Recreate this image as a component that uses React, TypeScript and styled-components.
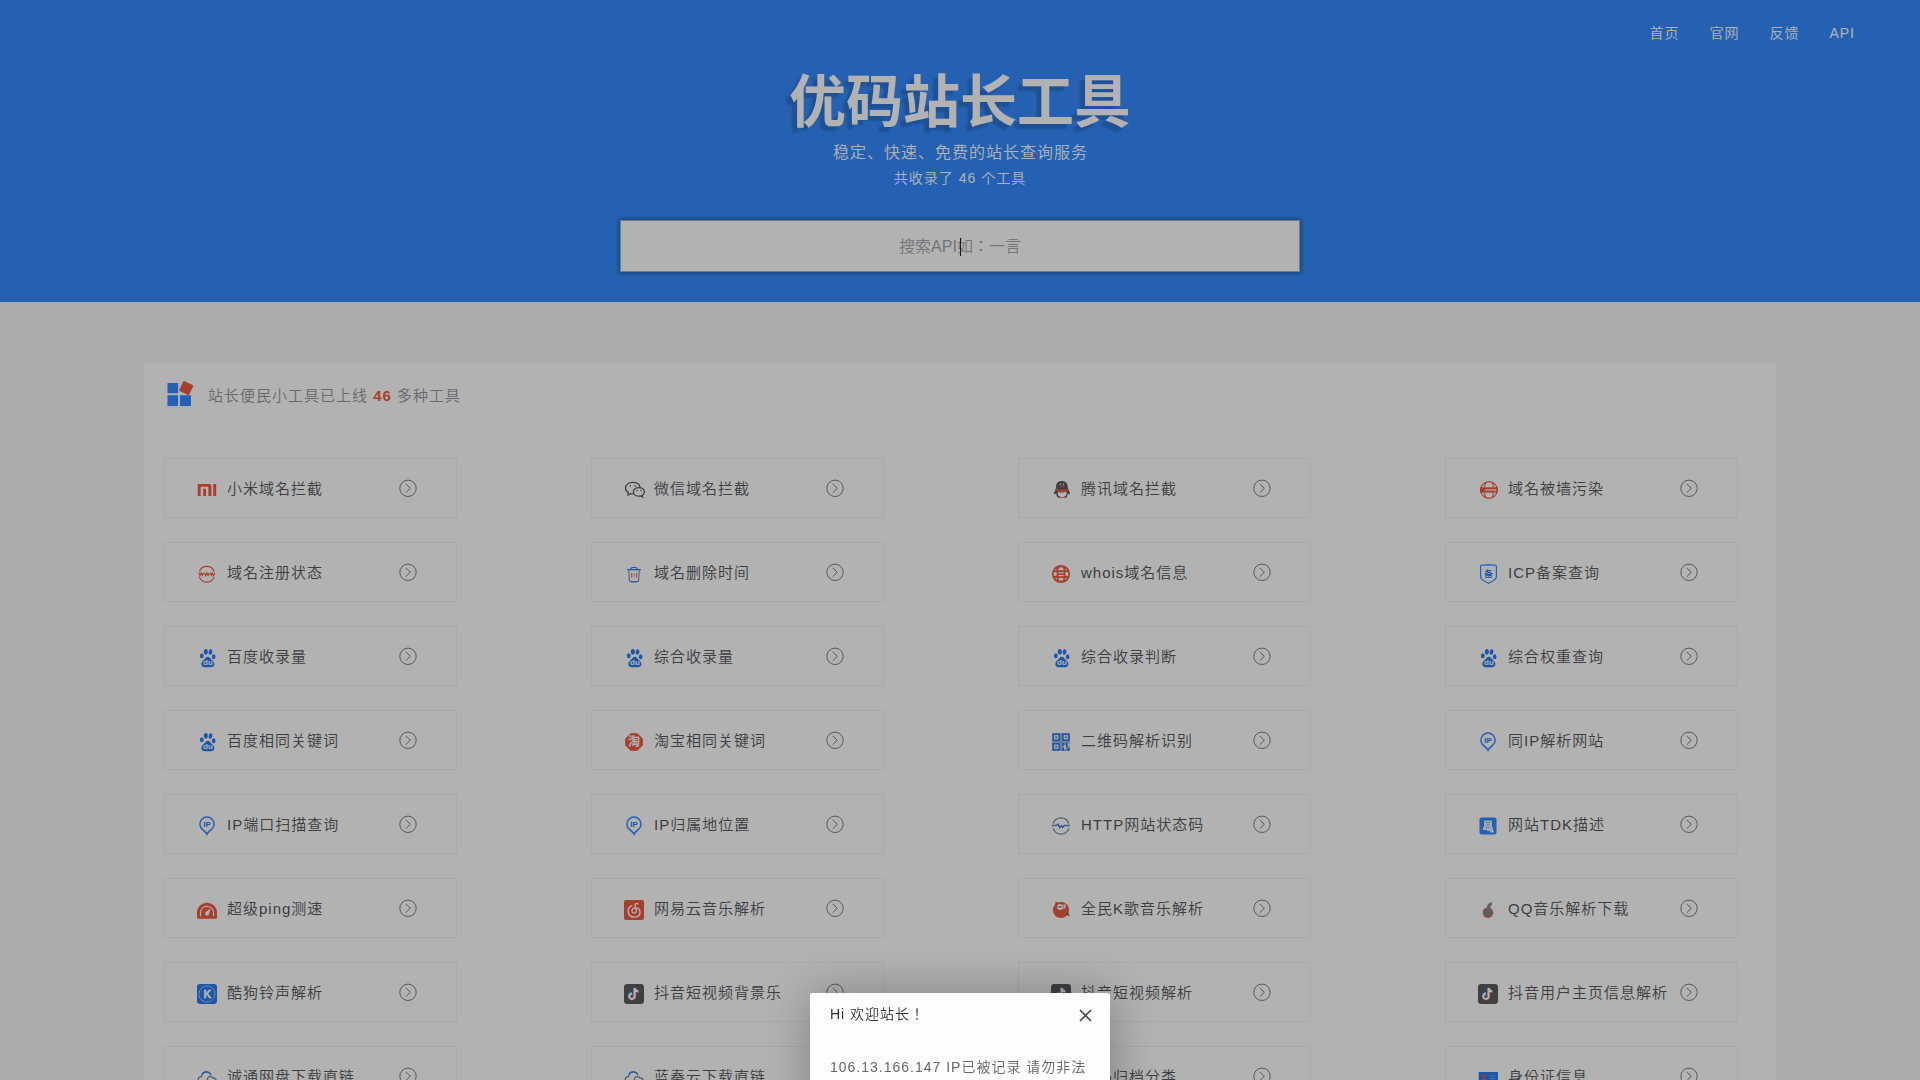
import React from "react";
import styled, { createGlobalStyle } from "styled-components";

const RED = "#ee5b41";
const BLUE = "#358cff";
const DEEP = "#297bf0";
const DARK = "#5c5c5c";

const GlobalStyle = createGlobalStyle`
  html, body { margin: 0; height: 100%; overflow: hidden; }
  body {
    background: #f5f5f5;
    font-family: "Liberation Sans", "Noto Sans CJK JP", "Noto Sans CJK SC", sans-serif;
    font-weight: 350;
    letter-spacing: 1px;
    font-size: 14px;
    color: #5c5e62;
  }
  * { box-sizing: border-box; }
`;

const Page = styled.div`
  height: 1080px;
  overflow: hidden;
`;

const Header = styled.header`
  height: 302px;
  background: ${BLUE};
  color: #fff;
  display: flex;
  flex-direction: column;
  align-items: center;
`;

const Nav = styled.nav`
  align-self: stretch;
  display: flex;
  justify-content: flex-end;
  gap: 30px;
  height: 66px;
  line-height: 66px;
  padding-right: 65px;
`;

const NavLink = styled.a`
  color: #fff;
`;

const Title = styled.h1`
  margin: 1px 0 0;
  height: 70px;
  line-height: 70px;
  font-size: 57px;
  font-weight: bold;
  letter-spacing: 0;
  text-shadow: -5px 5px 2px rgba(0, 0, 0, 0.17);
`;

const Slogan = styled.p`
  margin: 3px 0 0 1px;
  font-size: 16px;
  line-height: 26px;
`;

const Count = styled.p`
  margin: 0;
  line-height: 25px;
`;

const SearchBox = styled.div`
  margin-top: 29px;
  width: 680px;
  height: 52px;
  background: #fff;
  border: 1px solid #a9b0bb;
  box-shadow: 0 0 4px 2px rgba(0, 0, 0, 0.25);
  display: flex;
  align-items: center;
  justify-content: center;
  padding-bottom: 2px;
  position: relative;
  font-size: 16px;
  letter-spacing: 0;
  color: #a5a9b0;
`;

const Caret = styled.i`
  position: absolute;
  left: 339px;
  top: 17px;
  width: 1px;
  height: 18px;
  background: #222;
`;

const Panel = styled.main`
  width: 85%;
  margin: 60px auto 0;
  padding: 0 20px;
  height: 900px;
  background: #fff;
`;

const PanelHead = styled.div`
  display: flex;
  align-items: center;
  height: 66px;
  margin-bottom: 30px;
  font-size: 15px;
  color: #94979e;
`;

const PanelIcon = styled.svg`
  width: 30px;
  height: 30px;
  margin: -4px 13px 0 1px;
`;

const PanelText = styled.span`
  padding-bottom: 1px;
`;

const Total = styled.b`
  color: ${RED};
  font-weight: 700;
`;

const Grid = styled.div`
  display: grid;
  grid-template-columns: repeat(4, 293px);
  grid-auto-rows: 60px;
  gap: 24px 134px;
`;

const Card = styled.a`
  display: flex;
  align-items: center;
  border: 1px solid #f1f2f2;
  padding: 0 39.5px 0 32px;
  font-size: 15px;
  color: #57595d;
`;

const Glyph = styled.svg`
  flex: none;
  width: 20px;
  height: 20px;
  margin-top: 4px;
  margin-right: 10px;
  overflow: visible;
  letter-spacing: 0;
`;

const Label = styled.span`
  flex: 1;
  padding-bottom: 2px;
  white-space: nowrap;
`;

const Arrow = styled.svg`
  flex: none;
  width: 18px;
  height: 18px;
`;

const Shade = styled.div`
  position: fixed;
  inset: 0;
  background: rgba(0, 0, 0, 0.3);
`;

const Modal = styled.section`
  position: fixed;
  left: 810px;
  top: 993px;
  width: 300px;
  height: 170px;
  border-radius: 2px;
  background: #fdfdfd;
  box-shadow: 1px 1px 50px rgba(0, 0, 0, 0.3);
`;

const ModalHead = styled.div`
  display: flex;
  justify-content: space-between;
  align-items: center;
  height: 42px;
  padding: 0 18px 2px 20px;
  color: #333;
`;

const ModalBody = styled.div`
  padding: 20px;
  line-height: 24px;
  color: #666;
`;

const Close = styled.svg`
  width: 13px;
  height: 13px;
  margin-top: 4px;
`;

const note = "M10.6 4v8.2a2.7 2.7 0 1 1-2.5-2.6M10.6 4c.3 2 1.8 3.2 3.8 3.4";

const icons: Record<string, React.ReactNode> = {
  mi: (
    <g fill={RED}>
      <path d="M.7 4H12c1.6 0 2.4.8 2.4 2.4V16h-3V7.6c0-.6-.3-.9-.9-.9H3.7V16h-3z" />
      <path d="M6.2 8.8H9V16H6.2zM16.2 4h3v12h-3z" />
    </g>
  ),
  wechat: (
    <g fill="none" stroke={DARK} strokeWidth="1.300">
      <path d="M9.5 13.8c-1 .1-1.900 0-2.800-.2L4 15l.4-2.400C2.600 11.500 1.500 9.900 1.500 8c0-3.200 3.300-5.600 7.300-5.600 3.800 0 6.800 2 7.300 5" />
      <path d="M18 15.600c1.500-.9 2.400-2.200 2.400-3.700 0-2.500-2.400-4.300-5.500-4.300s-5.500 1.900-5.500 4.300 2.400 4.300 5.500 4.300c.7 0 1.200 0 1.700-.2l2 1z" />
      <path d="M5.700 6h1.300M10.400 6h1.300M12.400 10.500h1.100M16.400 10.500h1.100" />
    </g>
  ),
  qq: (
    <g>
      <path d="M10.800 1c3.500 0 5.900 2.200 5.900 5.500 0 1 .2 2 .8 3l1.500 3.500c.2 1-.3 1.700-1 1.200l-1-.8-1.500 4H6.500l-1.600-4-1 .8c-.7.5-1.100-.2-.9-1.200l1.500-3.500c.5-1 .6-2 .6-3C5.100 3.200 7.300 1 10.800 1z" fill={DARK} />
      <path d="M5 8.400c3.800 1.700 8 1.700 11.700 0l.5 2c-2.300 1.200-4.500 1.600-7 1.600l-.3 2.200H7.300l.2-2.700c-1-.2-2-.6-2.800-1z" fill={RED} />
      <path d="M6.800 12c2.700.8 6 .8 8.600-.4.900 3-.6 5.600-4.200 5.600S6.300 14.800 6.800 12z" fill="#fff" />
      <path d="M7.500 17.300h3M12 17.300h3.300M9 7h4" stroke={RED} strokeWidth="1.100" />
      <path d="M9.300 3.600v1.800M12.400 3.600v1.800" stroke="#fff" strokeWidth="1" />
    </g>
  ),
  blocked: (
    <g fill="none" stroke={RED} strokeWidth="1.100">
      <circle cx="11" cy="10" r="8.400" />
      <path d="M8 2.400C7 3.800 6.600 5.600 6.600 7.200M14 2.400c1 1.400 1.400 3.200 1.400 4.800M8 17.600c-1-1.400-1.400-3.200-1.400-4.800M14 17.600c1-1.400 1.400-3.200 1.400-4.800" />
      <path d="M2 7.300h17.700v5.300H2z" fill={RED} stroke="none" />
      <path d="M7.600 9.100h10.600v2H7.600z" fill="#fff" stroke="none" />
      <path d="m8.500 9.500.8 1.300.9-1.200.9 1.200.9-1.200.9 1.200.9-1.200.9 1.200.9-1.200.9 1.200.8-1.300" strokeWidth=".7" />
    </g>
  ),
  www: (
    <g fill="none" stroke={RED} strokeWidth="1.200">
      <path d="M2.300 7.500a8 8 0 0 1 15 0M2.300 12.900a8 8 0 0 0 15 0" />
      <path d="m1.800 8.800 1.200 2.800 1.300-2.800 1.200 2.800 1.100-2.800M7.500 8.800l1.200 2.800L9.900 8.800l1.200 2.800 1.200-2.800M13.200 8.800l1.100 2.800 1.200-2.800 1.200 2.800 1.200-2.800" strokeWidth="1.100" />
    </g>
  ),
  trash: (
    <g fill="none" stroke="#7f95b5" strokeWidth="1.200">
      <path d="M4.800 6.200 5.300 16c0 1.200.6 1.700 1.600 1.700h6.200c1 0 1.600-.5 1.600-1.700l.5-9.800" />
      <path d="M3.200 5.700h13.600M7 5.500c0-1.500.6-2 1.600-2h3c1 0 1.600.5 1.600 2M7 17.700h6" stroke={DEEP} />
      <path d="M7.700 9v4.500M12.600 9v4.500" stroke={RED} strokeWidth="1" />
      <path d="M10.100 9v4.500" stroke="#d9aba3" />
    </g>
  ),
  globe: (
    <g>
      <circle cx="10" cy="10" r="9.100" fill={RED} />
      <g fill="#fff">
        <path d="M8 3.500h4l.7 2.800H7.300zM7.300 8.200h5.400v1.400H7.300zM7.300 11h5.400v1.200H7.300zM7.500 14h5L12 16.600H8zM4.700 4.700 6 6.300H3.700zM15.300 4.700 14 6.300h2.300zM2.700 8.200h3v3.600h-3zM14.300 8.200h3v3.600h-3zM3.900 13.900h2v1.800zM16.100 13.900h-2v1.800z" />
      </g>
    </g>
  ),
  icp: (
    <g>
      <path d="M10.500.6c-2.300.5-5.500.6-6.700.6-.8 0-1.200.4-1.200 1.200v10.300c0 3 4.200 4.600 7.900 6.700 3.700-2.100 7.900-3.700 7.900-6.700V2.400c0-.8-.4-1.200-1.200-1.200-1.200 0-4.400-.1-6.700-.6z" fill="none" stroke={BLUE} strokeWidth="1.200" />
      <text x="10.500" y="12.900" fontSize="9" textAnchor="middle" fill={DEEP} fontWeight="500">备</text>
    </g>
  ),
  baidu: (
    <g fill={DEEP}>
      <ellipse cx="8.800" cy="3.700" rx="2" ry="2.800" />
      <ellipse cx="13.500" cy="4" rx="1.900" ry="2.700" transform="rotate(10 13.500 4)" />
      <ellipse cx="4.800" cy="7.800" rx="1.900" ry="2.500" />
      <ellipse cx="16.700" cy="8.800" rx="1.800" ry="2.500" />
      <path d="M10.800 8.800c1.600 0 2.300 1.400 3.500 2.700 1.600 1.600 3.400 2.600 3.100 5-.3 2.200-2 2.800-3.800 2.700-1.900-.1-3.700-.1-5.600 0-2 .1-3.500-.7-3.700-2.900-.2-2.100 1.500-3.200 2.900-4.700 1.200-1.400 2-2.800 3.600-2.800z" />
      <text x="10.900" y="17" fontSize="8" fontWeight="bold" textAnchor="middle" fill="#fff">du</text>
    </g>
  ),
  taobao: (
    <g>
      <path d="M6.800 1.800h6.400l5 5v6.400l-5 5H6.800l-5-5V6.800z" fill={RED} stroke={RED} strokeWidth="1.200" strokeLinejoin="round" />
      <text x="10" y="14.200" fontSize="12" fontWeight="bold" textAnchor="middle" fill="#fff">淘</text>
    </g>
  ),
  qr: (
    <g>
      <path d="M1 1h18v18H1z" fill="#9db7dc" />
      <g fill="#dfe9f7" stroke={DEEP} strokeWidth="1.500">
        <path d="M2.200 2.200h6v6h-6zM11.800 2.200h6v6h-6zM2.200 11.800h6v6h-6z" />
      </g>
      <path d="M4.400 4.400H6V6H4.400zM14 4.400h1.600V6H14zM4.400 14H6v1.600H4.400zM11 11h2.200v2.200H11zM15 11h1.500v4H15zM11 16h2v2.700h-2zM16.500 16h2v2.700h-2z" fill={DEEP} />
      <path d="M13.200 13.200H15V17h-1.800zM17 11.500h1.500v3H17z" fill="#fff" />
    </g>
  ),
  pin: (
    <g>
      <path d="M10 18.200c-1-2-2.700-3-4.300-4.600A7.100 7.100 0 0 1 2.900 8.200a7.100 7.100 0 0 1 14.200 0c0 2.300-1.200 4.100-2.800 5.400-1.600 1.600-3.300 2.600-4.300 4.600z" fill="none" stroke={BLUE} strokeWidth="1.500" />
      <text x="10.100" y="10.700" fontSize="8" fontWeight="bold" textAnchor="middle" fill={DEEP}>IP</text>
    </g>
  ),
  http: (
    <g fill="none" stroke="#6f86aa" strokeWidth="1.300">
      <path d="M2.200 7.600a8.200 8.200 0 0 1 15.600 0M2.200 12.400a8.200 8.200 0 0 0 15.600 0" />
      <path d="M.7 9.500h5M14 9.500h5" />
      <path d="M5.500 9.500 7 8.200l1.700 3.600 1.800-2.200 1.200 1.800 1.600-1.900h1" stroke={DEEP} strokeWidth="1.400" />
    </g>
  ),
  tdk: (
    <g>
      <rect x="1.500" y="1.500" width="17" height="17" rx="2" fill={BLUE} />
      <path d="M6 4.500h8v7h1V14l1 1v1.500h-4V15H9v-1H5v-3h1z" fill="#e4eefc" />
      <path d="M8 6.500h4M8 9h4M8 11.500h3" stroke="#8fb4e8" strokeWidth=".9" />
    </g>
  ),
  ping: (
    <g>
      <path d="M0 12.500a10 9.800 0 0 1 20 0v4.700c0 1-.5 1.500-1.500 1.500h-17c-1 0-1.500-.5-1.500-1.500z" fill={RED} />
      <path d="M3.500 16.200v-3.400a6.500 6.500 0 0 1 13 0v3.400" fill="none" stroke="#fff" strokeWidth="1.100" />
      <path d="M13.500 8.200 12 14.200a2 2 0 1 1-3.100-2.200z" fill="#fff" />
    </g>
  ),
  netease: (
    <g>
      <rect width="20" height="20" rx="2" fill={RED} />
      <path d="M13.800 3.900c-1.500-.9-3-.3-2.800 1.200l1.200 5.500c.3 1.400-.5 2.500-1.900 2.500-1.500 0-2.400-1.100-2.300-2.500.2-1.800 2-2.900 4-2.700 2.400.3 4 2 4 4.300 0 3-2.400 4.900-5.700 4.900-3.600 0-6.200-2.500-6.200-5.900 0-2.700 1.500-4.700 3.800-5.500" fill="none" stroke="#fff" strokeWidth="1.350" strokeLinecap="round" />
    </g>
  ),
  kge: (
    <g>
      <circle cx="10" cy="10" r="8.100" fill={RED} />
      <path d="M4.300 7V1.600l4.500 1.600z" fill={RED} />
      <ellipse cx="9" cy="7" rx="2.900" ry="3" fill="#fff" />
      <ellipse cx="13.100" cy="6.600" rx="1.600" ry="2.500" fill="#fff" transform="rotate(20 13.100 6.600)" />
      <path d="M7 7h2M12 5.800l1.200 1-1 1.500" fill="none" stroke={RED} strokeWidth=".9" />
      <circle cx="9.500" cy="6.800" r=".9" fill={DARK} />
      <path d="m15.500 13.500 3 2.200M16.500 12.500l1 3" stroke={DARK} strokeWidth="1.100" />
    </g>
  ),
  qqmusic: (
    <g>
      <circle cx="10" cy="12.700" r="4.800" fill="#858585" stroke={RED} strokeWidth="1.200" strokeDasharray="2 .6" />
      <path d="M8.500 12c.3-3.500-.1-5.800 1.500-7.800 1-1.300 2.300-1.700 4-2v2.200c-.4 1-1 1-1.700 1.400.3 2.200 1 3.600.9 6.200z" fill="#8c8c8c" />
    </g>
  ),
  kugou: (
    <g>
      <rect width="20" height="20" rx="3" fill={DEEP} />
      <circle cx="10" cy="10" r="8" fill="none" stroke="#c9dbf6" strokeWidth="1" strokeDasharray="2 .6" />
      <text x="10.200" y="13.700" fontSize="10.500" fontWeight="bold" textAnchor="middle" fill="#fff" stroke="#fff" strokeWidth=".5">K</text>
    </g>
  ),
  tiktok: (
    <g>
      <rect width="20" height="20" rx="3.200" fill={DARK} />
      <g fill="none" strokeWidth="2">
        <path d={note} stroke={BLUE} transform="translate(-.6 -.5)" />
        <path d={note} stroke={RED} transform="translate(.6 .6)" />
        <path d={note} stroke="#fff" />
      </g>
    </g>
  ),
  cloud: (
    <g fill="none" stroke="#7186a8" strokeWidth="1.300">
      <path d="M4 15.500C2.200 15 1.200 13.600 1.200 12c0-1.900 1.400-3.300 3.300-3.400.4-2.700 2.300-4.700 4.900-4.700 2.200 0 3.900 1.300 4.700 3.200" />
      <path d="M9 16.500h7c1.800 0 3.200-1.500 3.200-3.300s-1.400-3.200-3.200-3.200c-.8-1.600-2.700-2-4.200-1-1 .7-1.600 1.700-1.600 3" />
      <path d="M5.200 6.500C6 4.800 7.500 3.900 9.400 3.900c1.500 0 2.700.6 3.600 1.500" stroke={DEEP} />
    </g>
  ),
  idcard: (
    <g>
      <rect x=".7" y="4" width="19.300" height="13" rx=".6" fill={DEEP} />
      <circle cx="5.800" cy="7.800" r="1.600" fill={RED} />
      <path d="M3.300 13.500c0-2 1-3 2.500-3s2.500 1 2.500 3z" fill={RED} />
      <path d="M11.500 8h6M11.500 10.500h6M11.500 13h4" stroke="#7fb0f5" strokeWidth=".8" />
    </g>
  ),
};

const tools: [string, string][] = [
  ["mi", "小米域名拦截"],
  ["wechat", "微信域名拦截"],
  ["qq", "腾讯域名拦截"],
  ["blocked", "域名被墙污染"],
  ["www", "域名注册状态"],
  ["trash", "域名删除时间"],
  ["globe", "whois域名信息"],
  ["icp", "ICP备案查询"],
  ["baidu", "百度收录量"],
  ["baidu", "综合收录量"],
  ["baidu", "综合收录判断"],
  ["baidu", "综合权重查询"],
  ["baidu", "百度相同关键词"],
  ["taobao", "淘宝相同关键词"],
  ["qr", "二维码解析识别"],
  ["pin", "同IP解析网站"],
  ["pin", "IP端口扫描查询"],
  ["pin", "IP归属地位置"],
  ["http", "HTTP网站状态码"],
  ["tdk", "网站TDK描述"],
  ["ping", "超级ping测速"],
  ["netease", "网易云音乐解析"],
  ["kge", "全民K歌音乐解析"],
  ["qqmusic", "QQ音乐解析下载"],
  ["kugou", "酷狗铃声解析"],
  ["tiktok", "抖音短视频背景乐"],
  ["tiktok", "抖音短视频解析"],
  ["tiktok", "抖音用户主页信息解析"],
  ["cloud", "诚通网盘下载直链"],
  ["cloud", "蓝奏云下载直链"],
  ["idcard", "号码归档分类"],
  ["idcard", "身份证信息"],
];

const ToolCard = ({ icon, name }: { icon: string; name: string }) => (
  <Card>
    <Glyph viewBox="0 0 20 20">{icons[icon]}</Glyph>
    <Label>{name}</Label>
    <Arrow viewBox="0 0 18 18" fill="none" stroke="#7d7f84" strokeWidth="1">
      <circle cx="9" cy="9.300" r="8.200" />
      <path d="m6.800 4.900 4.500 4.400-4.500 4.400" />
    </Arrow>
  </Card>
);

export default function App() {
  return (
    <Page>
      <GlobalStyle />
      <Header>
        <Nav>
          <NavLink>首页</NavLink>
          <NavLink>官网</NavLink>
          <NavLink>反馈</NavLink>
          <NavLink>API</NavLink>
        </Nav>
        <Title>优码站长工具</Title>
        <Slogan>稳定、快速、免费的站长查询服务</Slogan>
        <Count>共收录了 46 个工具</Count>
        <SearchBox>
          搜索API如：一言
          <Caret />
        </SearchBox>
      </Header>
      <Panel>
        <PanelHead>
          <PanelIcon viewBox="0 0 30 30">
            <path d="M2.500 5h10.600v10.300H2.500zM2.500 17.200h10.600V28H2.500zM15 17.200h11V28H15z" fill={BLUE} />
            <rect x="15.800" y="4.600" width="11" height="11" rx="1" fill={RED} transform="rotate(26 21.300 9.900)" />
            <path d="M0 29.300h30" stroke="#f4f4f4" />
          </PanelIcon>
          <PanelText>
            站长便民小工具已上线 <Total>46</Total> 多种工具
          </PanelText>
        </PanelHead>
        <Grid>
          {tools.map(([icon, name]) => (
            <ToolCard key={name} icon={icon} name={name} />
          ))}
        </Grid>
      </Panel>
      <Shade />
      <Modal>
        <ModalHead>
          <span>Hi 欢迎站长！</span>
          <Close viewBox="0 0 13 13" stroke="#3a3a3f" strokeWidth="1.500">
            <path d="m1 1 11 11M12 1 1 12" />
          </Close>
        </ModalHead>
        <ModalBody>106.13.166.147 IP已被记录 请勿非法</ModalBody>
      </Modal>
    </Page>
  );
}
